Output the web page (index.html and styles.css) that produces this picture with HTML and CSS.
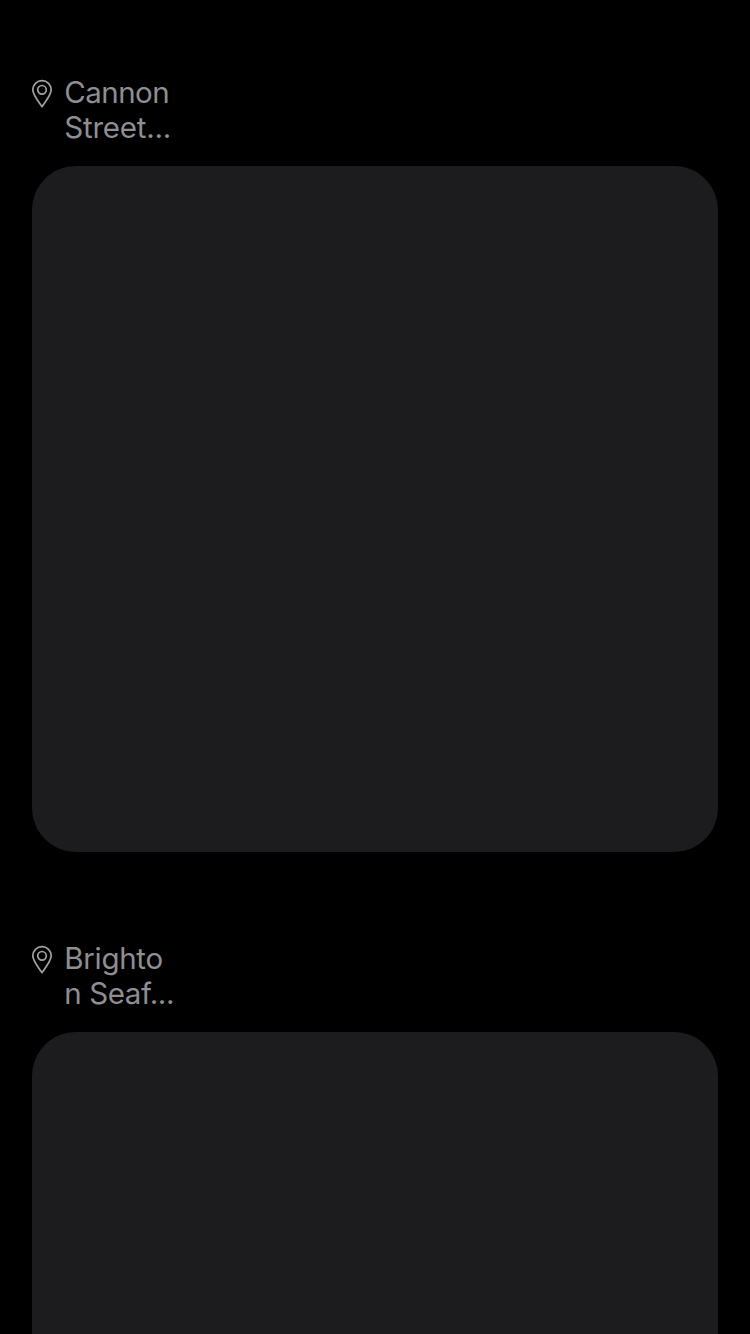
FILE: index.html
```html
<!DOCTYPE html>
<html lang="en">
<head>
<meta charset="utf-8">
<meta name="viewport" content="width=device-width">
<title>Places</title>
<link rel="stylesheet" href="styles.css">
</head>
<body>
<main class="feed">
  <article class="post">
    <header class="place">
      <svg class="pin" width="22" height="30" viewBox="0 0 22 30" aria-hidden="true">
        <path d="M11 27.6C7.2 22.4 1.8 15.8 1.8 10.8a9.2 9.2 0 0 1 18.4 0C20.2 15.8 14.8 22.4 11 27.6Z"/>
        <circle cx="11" cy="10.8" r="4.3"/>
      </svg>
      <h2 class="name">Cannon<br><span class="cut">Street...</span></h2>
    </header>
    <div class="card"></div>
  </article>
  <article class="post">
    <header class="place">
      <svg class="pin" width="22" height="30" viewBox="0 0 22 30" aria-hidden="true">
        <path d="M11 27.6C7.2 22.4 1.8 15.8 1.8 10.8a9.2 9.2 0 0 1 18.4 0C20.2 15.8 14.8 22.4 11 27.6Z"/>
        <circle cx="11" cy="10.8" r="4.3"/>
      </svg>
      <h2 class="name name-loose">Brighto<br><span class="cut-tight">n Seaf...</span></h2>
    </header>
    <div class="card"></div>
  </article>
</main>
</body>
</html>
```
FILE: styles.css
```css
html,
body {
  margin: 0;
  height: 1334px;
  overflow: hidden;
  background: #000;
}

.feed {
  box-sizing: border-box;
  height: 1334px;
  overflow: hidden;
  display: flex;
  flex-direction: column;
  gap: 89px;
  padding: 75px 32px 0;
}

.post {
  flex: none;
}

.place {
  display: flex;
  align-items: flex-start;
  gap: 11px;
  height: 91px;
  margin-left: -1px;
}

.pin {
  flex: none;
  margin-top: 4px;
  fill: none;
  stroke: #a3a3a5;
  stroke-width: 1.7;
}

.name {
  margin: 0;
  padding-left: 0.3px;
  color: #8e8e93;
  font: 400 29.5px/35px Inter, "Liberation Sans", sans-serif;
  letter-spacing: -0.55px;
  white-space: nowrap;
}

.name-loose {
  letter-spacing: -0.3px;
}

.cut {
  letter-spacing: -0.22px;
}

.cut-tight {
  letter-spacing: -0.42px;
}

.card {
  height: 686px;
  border-radius: 44px;
  background: #1c1c1e;
}
```
